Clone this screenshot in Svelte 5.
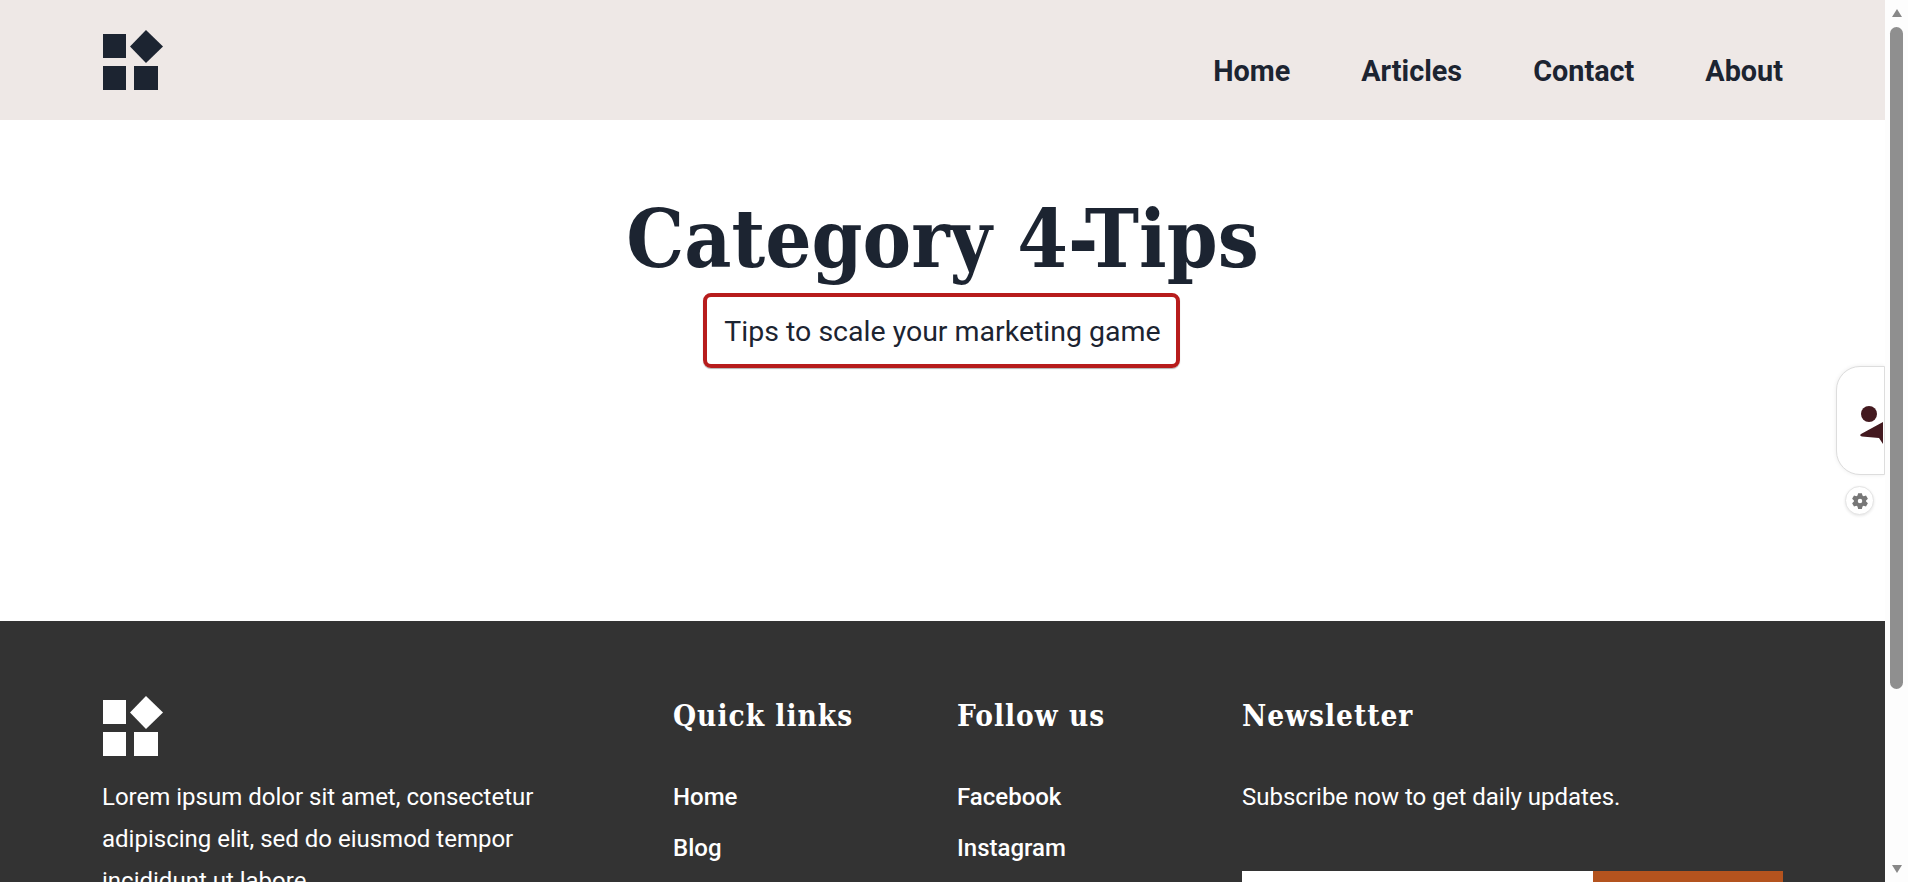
<script>
	const navLinks = ['Home', 'Articles', 'Contact', 'About'];
	const quickLinks = ['Home', 'Blog', 'About'];
	const followLinks = ['Facebook', 'Instagram', 'Twitter'];
</script>

{#snippet logo()}
	<svg class="logo" width="61" height="60" viewBox="0 0 61 60" fill="currentColor" aria-label="Logo">
		<rect x="0" y="4" width="23" height="24" />
		<rect x="0" y="36" width="23" height="24" />
		<rect x="31" y="36" width="24" height="24" />
		<path d="M43 0 60 16.500 43 33 27 16.500Z" />
	</svg>
{/snippet}

<div class="window">
	<div class="page">
		<header class="site-header">
			{@render logo()}
			<nav>
				{#each navLinks as link}
					<a href="#top">{link}</a>
				{/each}
			</nav>
		</header>

		<main>
			<h1>Category 4-Tips</h1>
			<p class="tagline">Tips to scale your marketing game</p>
		</main>

		<footer>
			<div class="footer-grid">
				<div class="about">
					{@render logo()}
					<p>Lorem ipsum dolor sit amet, consectetur adipiscing elit, sed do eiusmod tempor incididunt ut labore.</p>
				</div>
				<div>
					<h2>Quick links</h2>
					<ul>
						{#each quickLinks as link}
							<li><a href="#top">{link}</a></li>
						{/each}
					</ul>
				</div>
				<div>
					<h2>Follow us</h2>
					<ul>
						{#each followLinks as link}
							<li><a href="#top">{link}</a></li>
						{/each}
					</ul>
				</div>
				<div>
					<h2>Newsletter</h2>
					<p>Subscribe now to get daily updates.</p>
					<form class="subscribe">
						<input type="email" aria-label="Email" />
						<button type="button">Subscribe</button>
					</form>
				</div>
			</div>
		</footer>

		<div class="side-tab">
			<svg width="46" height="107" viewBox="0 0 46 107" fill="#43191f">
				<circle cx="32" cy="47" r="8" />
				<path d="M24 67 46 55V77L42 71 25 69.500Q22 68.500 24 67Z" />
			</svg>
		</div>
		<div class="side-gear">
			<svg width="18" height="18" viewBox="0 0 24 24" fill="#777">
				<path fill-rule="evenodd" d="M9.500 1.500h5l.8 3.200 1.500.9 3.200-.9 2.500 4.300-2.400 2.300v1.400l2.400 2.300-2.500 4.300-3.200-.9-1.500.9-.8 3.200h-5l-.8-3.200-1.500-.9-3.200.9-2.500-4.300 2.400-2.300v-1.400l-2.400-2.300 2.500-4.300 3.200.9 1.500-.9zM12 9a3 3 0 1 0 0 6 3 3 0 0 0 0-6z" />
			</svg>
		</div>
	</div>

	<div class="scrollbar">
		<span class="arrow up"></span>
		<span class="thumb"></span>
		<span class="arrow down"></span>
	</div>
</div>

<style>
	:global(body) {
		margin: 0;
		overflow: hidden;
		font-family: Roboto, sans-serif;
		background: #fff;
	}

	.window {
		display: flex;
		height: 882px;
	}

	.page {
		position: relative;
		flex: 1;
		min-width: 0;
		overflow: hidden;
	}

	.site-header {
		display: flex;
		justify-content: space-between;
		height: 120px;
		box-sizing: border-box;
		padding: 30px 102px 0 103px;
		background: #eee8e6;
		color: #1c2431;
	}

	nav {
		display: flex;
		gap: 71px;
		padding-top: 26px;
	}

	nav a {
		color: #1c2431;
		font-size: 28.800px;
		font-weight: 700;
		line-height: 31px;
		text-decoration: none;
	}

	main {
		height: 501px;
		box-sizing: border-box;
		padding-top: 68px;
		text-align: center;
	}

	h1 {
		margin: 0;
		color: #1c2431;
		font-family: 'DejaVu Serif Condensed', 'DejaVu Serif', serif;
		font-stretch: condensed;
		font-size: 81px;
		font-weight: 700;
		line-height: 102px;
	}

	.tagline {
		display: inline-block;
		margin: 3px 2px 0 0;
		padding: 14px 15px 12px 17px;
		border: 4px solid #b71c1c;
		border-radius: 8px;
		color: #1c2431;
		font-size: 28.500px;
		line-height: 41px;
		box-shadow: 0 1px 1px rgba(0, 0, 0, 0.3);
	}

	footer {
		height: 261px;
		box-sizing: border-box;
		padding: 75px 102px 0 103px;
		background: #333;
		color: #fff;
		overflow: hidden;
	}

	.footer-grid {
		display: grid;
		grid-template-columns: 570px 284px 285px 1fr;
		color: #fff;
	}

	.about .logo {
		display: block;
	}

	.about p {
		width: 460px;
		margin: 20px 0 0 -1px;
		font-size: 24px;
		line-height: 42px;
	}

	h2 {
		margin: 2px 0 0;
		font-family: 'DejaVu Serif Condensed', 'DejaVu Serif', serif;
		font-stretch: condensed;
		font-size: 29.500px;
		font-weight: 700;
		line-height: 36px;
		letter-spacing: 1px;
	}

	ul {
		margin: 48px 0 0;
		padding: 0;
		list-style: none;
	}

	li {
		margin-bottom: 21px;
		font-size: 24px;
		line-height: 30px;
	}

	li a {
		color: #fff;
		font-weight: 500;
		text-decoration: none;
	}

	.footer-grid > div:last-child p {
		margin: 48px 0 0;
		font-size: 24px;
		line-height: 30px;
	}

	.subscribe {
		display: flex;
		margin-top: 59px;
	}

	.subscribe input {
		width: 351px;
		height: 64px;
		box-sizing: border-box;
		border: 0;
		background: #fff;
	}

	.subscribe button {
		width: 190px;
		height: 64px;
		border: 0;
		background: #b4531e;
		color: #fff;
		font-size: 24px;
	}

	.side-tab {
		position: absolute;
		top: 366px;
		right: 0;
		display: flex;
		justify-content: flex-start;
		width: 49px;
		height: 109px;
		box-sizing: border-box;
		border: 1px solid #ddd;
		border-radius: 24px 0 0 24px;
		background: #fff;
		box-shadow: 0 0 4px rgba(0, 0, 0, 0.08);
		overflow: hidden;
	}

	.side-gear {
		position: absolute;
		top: 486px;
		right: 11px;
		display: flex;
		align-items: center;
		justify-content: center;
		width: 29px;
		height: 29px;
		box-sizing: border-box;
		border: 1px solid #e4e4e4;
		border-radius: 50%;
		background: #fff;
		box-shadow: 0 1px 3px rgba(0, 0, 0, 0.1);
	}

	.scrollbar {
		display: flex;
		flex-direction: column;
		align-items: center;
		width: 23px;
		background: #fdfdfd;
	}

	.arrow {
		flex: none;
		width: 0;
		height: 0;
		margin: 9px 0;
		border-left: 5px solid transparent;
		border-right: 5px solid transparent;
	}

	.arrow.up {
		border-bottom: 8px solid #888;
	}

	.arrow.down {
		margin-top: auto;
		border-top: 8px solid #888;
	}

	.thumb {
		width: 13px;
		height: 662px;
		margin-top: 1px;
		border-radius: 7px;
		background: #8f8f8f;
	}
</style>
